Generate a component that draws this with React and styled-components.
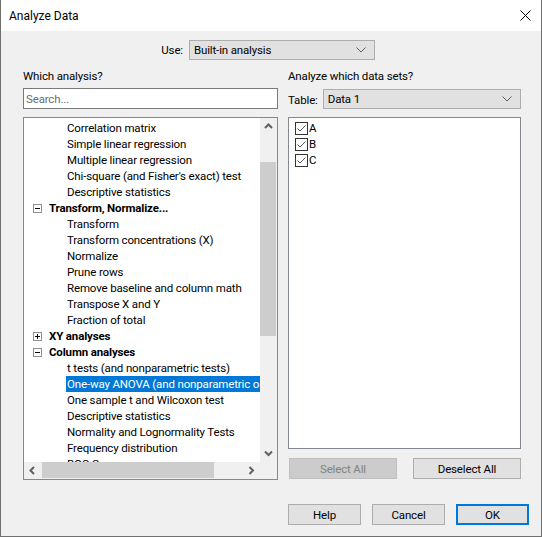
import React from 'react'
import styled, { createGlobalStyle, css } from 'styled-components'

const GlobalStyle = createGlobalStyle`
  html, body {
    margin: 0;
    padding: 0;
    background: #f0f0f0;
  }
  body {
    font-family: Roboto, "Noto Sans", "Liberation Sans", sans-serif;
    font-size: 11.5px;
    letter-spacing: -0.15px;
    color: #000;
  }
  * { box-sizing: border-box; }
`

const Window = styled.div`
  width: 542px;
  height: 537px;
  display: flex;
  flex-direction: column;
  border: 1px solid #707070;
  border-top: none;
  background: #f0f0f0;
  overflow: hidden;
`
const TitleBar = styled.div`
  height: 31px;
  flex: none;
  background: #fff;
  display: flex;
  align-items: center;
  justify-content: space-between;
  padding: 0 10px 0 8px;
  font-size: 12px;
  letter-spacing: 0;
`
const Body = styled.div`
  flex: 1;
  display: flex;
  flex-direction: column;
  padding: 9px 11px 0 22px;
`
const UseRow = styled.div`
  display: grid;
  grid-template-columns: 160px 186px;
  column-gap: 6px;
  align-items: center;
  height: 20px;
`
const UseLabel = styled.span`
  text-align: right;
`
const Columns = styled.div`
  display: grid;
  grid-template-columns: 255px 233px;
  column-gap: 10px;
  margin-top: 8px;
`
const Column = styled.div`
  display: flex;
  flex-direction: column;
`
const Label = styled.div`
  height: 16px;
  line-height: 16px;
  margin-bottom: 4px;
`
const Combo = styled.div`
  height: 20px;
  width: ${p => p.$w || 'auto'};
  flex: ${p => (p.$w ? 'none' : '1')};
  background: #e1e1e1;
  border: 1px solid #adadad;
  display: flex;
  align-items: center;
  justify-content: space-between;
  padding: 0 8px 0 4px;
`
const TextBox = styled.div`
  height: 21px;
  background: #fff;
  border: 1px solid #7a7a7a;
  display: flex;
  align-items: center;
  padding-left: 2px;
  color: #6d6d6d;
`
const TableRow = styled.div`
  display: flex;
  align-items: center;
  gap: 5px;
  height: 21px;
`
const TableLabel = styled.span`
  padding-top: 3px;
`
const TreeBox = styled.div`
  margin-top: 8px;
  height: 363px;
  border: 1px solid #828790;
  background: #fff;
  display: grid;
  grid-template-columns: 1fr 17px;
  grid-template-rows: 1fr 17px;
`
const TreeContent = styled.div`
  overflow: hidden;
  padding-top: 2px;
`
const Row = styled.div`
  height: 16px;
  line-height: 16px;
  display: flex;
  align-items: center;
  white-space: nowrap;
  padding-left: ${p => (p.$group ? '9px' : '42px')};
  font-weight: ${p => (p.$group ? 700 : 400)};
`
const ItemText = styled.span`
  padding: 0 1px;
  height: 16px;
  ${p => p.$selected && css`
    background: #0078d7;
    color: #fff;
    flex: 1;
  `}
`
const Expander = styled.span`
  width: 9px;
  height: 9px;
  border: 1px solid #919191;
  margin-right: 6px;
  display: flex;
  align-items: center;
  justify-content: center;
`
const VScroll = styled.div`
  background: #f0f0f0;
  display: flex;
  flex-direction: column;
`
const HScroll = styled.div`
  background: #f0f0f0;
  display: flex;
`
const Arrow = styled.div`
  flex: none;
  width: 17px;
  height: 17px;
  display: flex;
  align-items: center;
  justify-content: center;
`
const Track = styled.div`
  flex: 1;
  display: flex;
  flex-direction: ${p => (p.$vertical ? 'column' : 'row')};
`
const Thumb = styled.div`
  background: #cdcdcd;
  ${p => p.$vertical ? css`
    margin: 27px 1px 0 0;
    height: 174px;
  ` : css`
    margin: 0 0 1px 1px;
    width: 172px;
  `}
`
const Corner = styled.div`
  background: #f0f0f0;
`
const ListBox = styled.div`
  margin-top: 8px;
  height: 332px;
  border: 1px solid #828790;
  background: #fff;
  padding: 2px 0 0 6px;
`
const CheckRow = styled.div`
  height: 16px;
  display: flex;
  align-items: center;
  gap: 1px;
`
const Box = styled.span`
  width: 13px;
  height: 13px;
  border: 1px solid #333;
  background: #fff;
  display: flex;
  align-items: center;
  justify-content: center;
`
const ButtonPair = styled.div`
  display: flex;
  justify-content: space-between;
  margin-top: 9px;
  padding-left: 1px;
`
const Button = styled.div`
  width: ${p => p.$w || '73px'};
  height: 21px;
  display: flex;
  align-items: center;
  justify-content: center;
  background: #e1e1e1;
  border: 1px solid #adadad;
  ${p => p.$disabled && css`
    background: #cccccc;
    border-color: #bfbfbf;
    color: #838383;
  `}
  ${p => p.$default && css`
    border: 2px solid #0078d7;
  `}
`
const Footer = styled.div`
  display: flex;
  justify-content: flex-end;
  gap: 11px;
  margin-top: 24px;
  padding-right: 1px;
`

const Chevron = ({ dir = 'down', color = '#606060', w = 2 }) => {
  const pts = {
    up: '1,5 4.5,1.5 8,5',
    down: '1,1.5 4.5,5 8,1.5',
    left: '5,1 1.5,4.5 5,8',
    right: '1.5,1 5,4.5 1.5,8',
  }[dir]
  const horiz = dir === 'up' || dir === 'down'
  return (
    <svg width={horiz ? 9 : 7} height={horiz ? 7 : 9} viewBox={horiz ? '0 0 9 7' : '0 0 7 9'}>
      <polyline points={pts} fill="none" stroke={color} strokeWidth={w} />
    </svg>
  )
}

const ComboChevron = () => (
  <svg width="10" height="6" viewBox="0 0 10 6">
    <polyline points="0.5,0.5 5,5 9.5,0.5" fill="none" stroke="#606060" strokeWidth="1" />
  </svg>
)

const CloseIcon = () => (
  <svg width="11" height="11" viewBox="0 0 11 11">
    <path d="M0.5 0.5 L10.5 10.5 M10.5 0.5 L0.5 10.5" stroke="#000" strokeWidth="1" />
  </svg>
)

const ExpandIcon = ({ open }) => (
  <svg width="7" height="7" viewBox="0 0 7 7">
    <path d="M1 3.5 H6" stroke="#000" strokeWidth="1" />
    {!open && <path d="M3.5 1 V6" stroke="#000" strokeWidth="1" />}
  </svg>
)

const CheckIcon = () => (
  <svg width="11" height="11" viewBox="0 0 11 11">
    <polyline points="1.5,5.5 4,8 9.5,2.5" fill="none" stroke="#555" strokeWidth="1" />
  </svg>
)

const tree = [
  { t: 'Correlation matrix' },
  { t: 'Simple linear regression' },
  { t: 'Multiple linear regression' },
  { t: "Chi-square (and Fisher's exact) test" },
  { t: 'Descriptive statistics' },
  { t: 'Transform, Normalize...', group: true, open: true },
  { t: 'Transform' },
  { t: 'Transform concentrations (X)' },
  { t: 'Normalize' },
  { t: 'Prune rows' },
  { t: 'Remove baseline and column math' },
  { t: 'Transpose X and Y' },
  { t: 'Fraction of total' },
  { t: 'XY analyses', group: true, open: false },
  { t: 'Column analyses', group: true, open: true },
  { t: 't tests (and nonparametric tests)' },
  { t: 'One-way ANOVA (and nonparametric or mixed)', selected: true },
  { t: 'One sample t and Wilcoxon test' },
  { t: 'Descriptive statistics' },
  { t: 'Normality and Lognormality Tests' },
  { t: 'Frequency distribution' },
  { t: 'ROC Curve' },
]

const dataSets = ['A', 'B', 'C']

const App = () => {
  return (
    <>
      <GlobalStyle />
      <Window>
        <TitleBar>
          <span>Analyze Data</span>
          <CloseIcon />
        </TitleBar>
        <Body>
          <UseRow>
            <UseLabel>Use:</UseLabel>
            <Combo $w="186px">
              <span>Built-in analysis</span>
              <ComboChevron />
            </Combo>
          </UseRow>
          <Columns>
            <Column>
              <Label>Which analysis?</Label>
              <TextBox>Search...</TextBox>
              <TreeBox>
                <TreeContent>
                  {tree.map((r, i) => (
                    <Row key={i} $group={r.group}>
                      {r.group && (
                        <Expander>
                          <ExpandIcon open={r.open} />
                        </Expander>
                      )}
                      <ItemText $selected={r.selected}>{r.t}</ItemText>
                    </Row>
                  ))}
                </TreeContent>
                <VScroll>
                  <Arrow><Chevron dir="up" /></Arrow>
                  <Track $vertical>
                    <Thumb $vertical />
                  </Track>
                  <Arrow><Chevron dir="down" /></Arrow>
                </VScroll>
                <HScroll>
                  <Arrow><Chevron dir="left" /></Arrow>
                  <Track>
                    <Thumb />
                  </Track>
                  <Arrow><Chevron dir="right" /></Arrow>
                </HScroll>
                <Corner />
              </TreeBox>
            </Column>
            <Column>
              <Label>Analyze which data sets?</Label>
              <TableRow>
                <TableLabel>Table:</TableLabel>
                <Combo>
                  <span>Data 1</span>
                  <ComboChevron />
                </Combo>
              </TableRow>
              <ListBox>
                {dataSets.map(d => (
                  <CheckRow key={d}>
                    <Box><CheckIcon /></Box>
                    <span>{d}</span>
                  </CheckRow>
                ))}
              </ListBox>
              <ButtonPair>
                <Button $w="108px" $disabled>Select All</Button>
                <Button $w="108px">Deselect All</Button>
              </ButtonPair>
            </Column>
          </Columns>
          <Footer>
            <Button>Help</Button>
            <Button>Cancel</Button>
            <Button $default>OK</Button>
          </Footer>
        </Body>
      </Window>
    </>
  )
}

export default App
